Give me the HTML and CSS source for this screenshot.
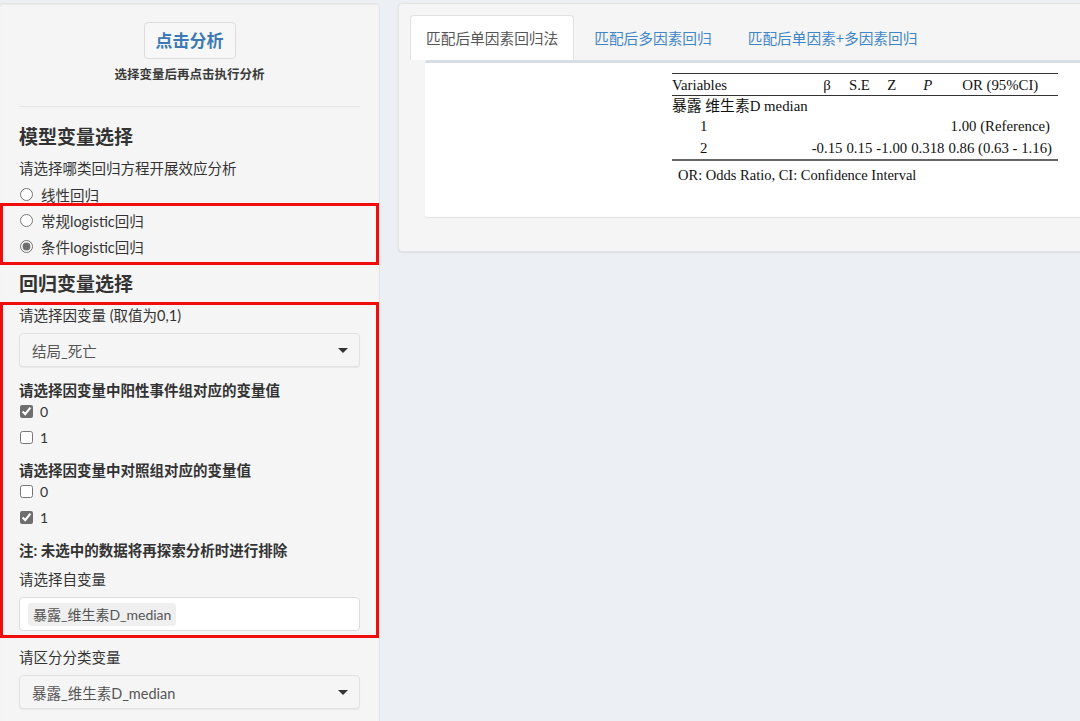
FILE: index.html
```html
<!DOCTYPE html>
<html lang="zh">
<head>
    <meta charset="UTF-8">
    <title>匹配后回归分析</title>
    <link rel="stylesheet" href="styles.css">
</head>
<body>
    <div class="page">
        <aside class="sidebar">
            <div class="run-block">
                <button class="run-btn">点击分析</button>
                <p class="run-hint">选择变量后再点击执行分析</p>
            </div>
            <hr class="divider">

            <h3 class="section-title">模型变量选择</h3>
            <div class="field-label">请选择哪类回归方程开展效应分析</div>
            <label class="opt-row"><input type="radio" name="model"><span>线性回归</span></label>
            <div class="mark mark-model">
                <label class="opt-row"><input type="radio" name="model"><span>常规logistic回归</span></label>
                <label class="opt-row"><input type="radio" name="model" checked><span>条件logistic回归</span></label>
            </div>

            <h3 class="section-title title-reg">回归变量选择</h3>
            <div class="mark mark-reg">
                <div class="field-label">请选择因变量 (取值为0,1)</div>
                <div class="select-box">
                    <span>结局_死亡</span>
                    <span class="caret"></span>
                </div>

                <div class="bold-label">请选择因变量中阳性事件组对应的变量值</div>
                <label class="check-row"><input type="checkbox" checked><span>0</span></label>
                <label class="check-row"><input type="checkbox"><span>1</span></label>

                <div class="bold-label">请选择因变量中对照组对应的变量值</div>
                <label class="check-row"><input type="checkbox"><span>0</span></label>
                <label class="check-row"><input type="checkbox" checked><span>1</span></label>

                <div class="bold-label">注: 未选中的数据将再探索分析时进行排除</div>
                <div class="field-label label-gap">请选择自变量</div>
                <div class="multi-input">
                    <span class="tag">暴露_维生素D_median</span>
                </div>
            </div>

            <div class="field-label label-after">请区分分类变量</div>
            <div class="select-box">
                <span>暴露_维生素D_median</span>
                <span class="caret"></span>
            </div>
        </aside>

        <main class="main-panel">
            <ul class="tabs">
                <li class="tab active">匹配后单因素回归法</li>
                <li class="tab">匹配后多因素回归</li>
                <li class="tab">匹配后单因素+多因素回归</li>
            </ul>
            <div class="tab-body">
                <div class="result">
                    <table class="reg-table">
                        <thead>
                            <tr>
                                <th class="var-col">Variables</th>
                                <th>β</th>
                                <th>S.E</th>
                                <th>Z</th>
                                <th><i>P</i></th>
                                <th class="or-col">OR (95%CI)</th>
                            </tr>
                        </thead>
                        <tbody>
                            <tr class="group-row">
                                <td class="var-col">暴露 维生素D median</td>
                                <td></td><td></td><td></td><td></td><td></td>
                            </tr>
                            <tr>
                                <td class="var-col level">1</td>
                                <td></td><td></td><td></td><td></td>
                                <td class="or-col">1.00 (Reference)</td>
                            </tr>
                            <tr>
                                <td class="var-col level">2</td>
                                <td>-0.15</td>
                                <td>0.15</td>
                                <td>-1.00</td>
                                <td>0.318</td>
                                <td class="or-col">0.86 (0.63 - 1.16)</td>
                            </tr>
                        </tbody>
                    </table>
                    <p class="footnote">OR: Odds Ratio, CI: Confidence Interval</p>
                </div>
            </div>
        </main>
    </div>
</body>
</html>
```

FILE: styles.css
```css
body {
    margin: 0;
    background-color: #ecf0f5;
    font-family: Lato, "Noto Sans CJK SC", sans-serif;
    color: #333;
    overflow: hidden;
}
.page {
    display: flex;
    align-items: flex-start;
    gap: 18px;
    padding-top: 3px;
    height: 718px;
    overflow: hidden;
}

/* sidebar */
.sidebar {
    box-sizing: border-box;
    width: 381px;
    height: 722px;
    margin-left: -1px;
    padding: 18px 19px;
    background-color: #f5f5f5;
    border: 1px solid #e3e3e3;
    border-radius: 4px;
    box-shadow: inset 0 1px 1px rgba(0,0,0,0.04);
    flex-shrink: 0;
    overflow: hidden;
}
.run-block {
    text-align: center;
}
.run-btn {
    font-family: Lato, "Noto Sans CJK SC", sans-serif;
    font-size: 17px;
    font-weight: bold;
    line-height: 23px;
    color: #3d7ab3;
    background-color: #f7f7f7;
    border: 1px solid #dcdcdc;
    border-radius: 4px;
    padding: 6px 11px;
}
.run-hint {
    margin: 8px 0 0;
    font-size: 12.5px;
    line-height: 16px;
    font-weight: bold;
    color: #3a3a3a;
}
.divider {
    border: 0;
    border-top: 1px solid #e6e6e6;
    margin: 23px 0 17px;
}
.section-title {
    margin: 0;
    font-size: 19px;
    line-height: 26px;
    font-weight: bold;
    color: #333;
}
.title-reg {
    margin-top: 6px;
}
.field-label {
    font-size: 14.5px;
    line-height: 20px;
    color: #333;
    margin: 9px 0 2px;
}
.label-gap {
    margin: 9px 0 7px;
}
.label-after {
    margin: 10px 0 7px;
}
.opt-row {
    display: flex;
    align-items: center;
    height: 26px;
    font-size: 14.5px;
    color: #333;
}
.opt-row input {
    width: 13px;
    height: 13px;
    margin: 0 8px 0 1px;
    accent-color: #6e6e6e;
}
.mark {
    border: 3px solid #f20d0d;
    margin-left: -19px;
    margin-right: -19px;
    padding-left: 16px;
    padding-right: 16px;
}
.mark-model {
    margin-top: -4px;
    padding-top: 1px;
    padding-bottom: 3px;
}
.mark-reg {
    margin-top: 5px;
    padding-top: 1px;
    padding-bottom: 4px;
}
.mark-reg .field-label:first-child {
    margin: 0 0 7px;
}
.select-box {
    display: flex;
    align-items: center;
    justify-content: space-between;
    height: 32px;
    padding: 0 11px 0 12px;
    background-color: #f5f5f5;
    border: 1px solid #e2e2e2;
    border-radius: 4px;
    box-shadow: 0 1px 1px rgba(0,0,0,0.06);
    font-size: 14.5px;
    color: #555;
}
.caret {
    width: 0;
    height: 0;
    border-left: 5px solid transparent;
    border-right: 5px solid transparent;
    border-top: 5px solid #333;
}
.bold-label {
    font-size: 14.5px;
    line-height: 20px;
    font-weight: bold;
    color: #333;
    margin: 14px 0 0;
}
.check-row {
    display: flex;
    align-items: center;
    height: 20px;
    margin-top: 6px;
    font-size: 14px;
    color: #333;
}
.bold-label + .check-row {
    margin-top: 0;
}
.check-row input {
    width: 13px;
    height: 13px;
    margin: 0 7px 0 1px;
    accent-color: #6e6e6e;
}
.multi-input {
    display: flex;
    align-items: center;
    height: 32px;
    padding: 0 8px;
    background-color: #fff;
    border: 1px solid #dcdcdc;
    border-radius: 4px;
}
.tag {
    background-color: #efefef;
    border-radius: 3px;
    padding: 2px 5px;
    font-size: 14px;
    line-height: 19px;
    color: #555;
}

/* main panel */
.main-panel {
    flex: 1;
    margin-right: -40px;
    height: 236px;
    padding: 11px 0 0 11px;
    background-color: #f5f5f5;
    border: 1px solid #e3e3e3;
    border-radius: 4px;
    box-shadow: 0 1px 2px rgba(0,0,0,0.08);
}
.tabs {
    display: flex;
    list-style: none;
    margin: 0;
    padding: 0;
    gap: 4px;
}
.tab {
    height: 44px;
    line-height: 44px;
    padding: 0 15px;
    font-size: 14.7px;
    color: #3f86c6;
    border: 1px solid transparent;
    border-bottom: 0;
    border-radius: 4px 4px 0 0;
    font-family: "Noto Sans CJK SC", sans-serif;
}
.tab.active {
    background-color: #fff;
    color: #555;
    border-color: #e0e0e0;
}
.tab-body {
    margin-left: 15px;
    height: 154px;
    background-color: #fff;
    border-top: 3px solid #d8dde5;
    border-radius: 3px;
    box-shadow: 0 1px 1px rgba(0,0,0,0.08);
}
.result {
    padding: 10px 0 0 247px;
}
.reg-table {
    border-collapse: collapse;
    font-family: "Liberation Serif", "Noto Sans CJK SC", serif;
    font-size: 14.8px;
    line-height: 18px;
    color: #111;
    border-top: 1px solid #333;
    border-bottom: 2px solid #666;
}
.reg-table th {
    font-weight: normal;
    height: 21px;
    padding: 0 2px;
    text-align: center;
    border-bottom: 1px solid #333;
}
.reg-table td {
    height: 22px;
    padding: 0 2px;
    text-align: center;
    white-space: nowrap;
}
.reg-table .group-row td {
    height: 19px;
}
.reg-table .var-col {
    width: 134px;
    text-align: left;
    padding-left: 0;
}
.reg-table .level {
    padding-left: 28px;
    width: 106px;
}
.reg-table .or-col {
    padding-right: 6px;
}
.footnote {
    margin: 6px 0 0 6px;
    font-family: "Liberation Serif", serif;
    font-size: 14.5px;
    color: #111;
}
```
